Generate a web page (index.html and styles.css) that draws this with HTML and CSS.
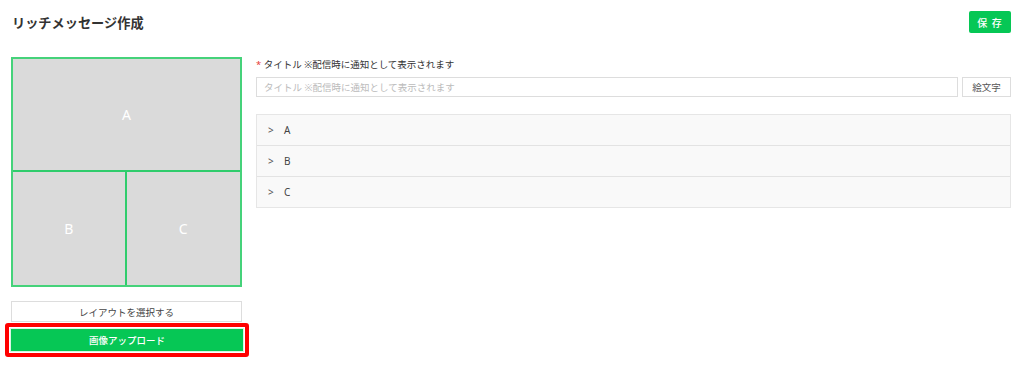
FILE: index.html
```html
<!DOCTYPE html>
<html lang="ja">
<head>
  <meta charset="UTF-8" />
  <meta name="viewport" content="width=device-width, initial-scale=1.0"/>
  <title>リッチメッセージ作成</title>
  <link rel="stylesheet" href="styles.css">
</head>
<body>

  <div class="page">
    <div class="header">
      <h1>リッチメッセージ作成</h1>
      <button class="btn-save">保 存</button>
    </div>

    <div class="main">
      <!-- left: layout preview -->
      <div class="preview">
        <div class="layout">
          <div class="cell cell-a">A</div>
          <div class="cell cell-b">B</div>
          <div class="cell cell-c">C</div>
        </div>

        <button class="btn-layout">レイアウトを選択する</button>
        <div class="highlight">
          <button class="btn-upload">画像アップロード</button>
        </div>
      </div>

      <!-- right: form -->
      <div class="form">
        <label class="field-label"><span class="req">*</span> タイトル ※配信時に通知として表示されます</label>
        <div class="input-row">
          <input type="text" placeholder="タイトル ※配信時に通知として表示されます">
          <button class="btn-emoji">絵文字</button>
        </div>

        <div class="accordion">
          <div class="acc-row"><span class="chev">&gt;</span>A</div>
          <div class="acc-row"><span class="chev">&gt;</span>B</div>
          <div class="acc-row"><span class="chev">&gt;</span>C</div>
        </div>
      </div>
    </div>
  </div>

</body>
</html>
```

FILE: styles.css
```css
body {
  margin: 0;
  font-family: 'Noto Sans', 'Noto Sans CJK JP', sans-serif;
  background: #fff;
  color: #333;
}

.page {
  padding: 11px 13px 0 11px;
}

.header {
  display: flex;
  justify-content: space-between;
  align-items: center;
  height: 22px;
}

h1 {
  margin: 0 0 0 1px;
  font-size: 13.2px;
  font-weight: bold;
  color: #333;
}

.btn-save {
  width: 42px;
  height: 22px;
  padding: 0;
  border: none;
  border-radius: 2px;
  background: #06c755;
  color: #fff;
  font-family: inherit;
  font-size: 10px;
  font-weight: 500;
  letter-spacing: 1px;
  cursor: pointer;
}

.main {
  display: flex;
  gap: 14px;
  margin-top: 24px;
}

.preview {
  width: 231px;
  flex-shrink: 0;
}

.layout {
  height: 230px;
  box-sizing: border-box;
  border: 2px solid #45d27a;
  display: grid;
  grid-template-columns: 1fr 1fr;
  grid-template-rows: 1fr 1fr;
  background: #dadada;
}

.cell {
  display: flex;
  justify-content: center;
  align-items: center;
  color: #fff;
  font-size: 14px;
}

.cell-a {
  grid-column: span 2;
  border-bottom: 2px solid #2fcc6c;
}

.cell-b {
  border-right: 2px solid #2fcc6c;
}

.btn-layout {
  display: block;
  width: 100%;
  height: 21px;
  margin-top: 14px;
  padding: 0;
  border: 1px solid #ddd;
  background: #fff;
  color: #444;
  font-family: inherit;
  font-size: 9.5px;
  cursor: pointer;
}

.highlight {
  margin: 1px -7px 0 -6px;
  border: 4px solid #f00;
  border-radius: 3px;
  padding: 1px;
}

.btn-upload {
  display: block;
  width: 100%;
  height: 24px;
  padding: 0;
  border: 1px solid #d8f5e3;
  background: #06c755;
  color: #fff;
  font-family: inherit;
  font-size: 9.5px;
  font-weight: 500;
  cursor: pointer;
}

.form {
  flex: 1;
}

.field-label {
  display: block;
  font-size: 9.5px;
  line-height: 13px;
  margin-top: 1px;
  color: #333;
}

.req {
  color: #e53935;
}

.input-row {
  display: flex;
  gap: 4px;
  margin-top: 6px;
}

.input-row input {
  flex: 1;
  height: 20px;
  box-sizing: border-box;
  border: 1px solid #ddd;
  padding: 0 7px;
  font-family: inherit;
  font-size: 9.5px;
  color: #333;
}

.input-row input::placeholder {
  color: #bbb;
}

.btn-emoji {
  width: 49px;
  height: 20px;
  padding: 0;
  border: 1px solid #ddd;
  background: #fff;
  color: #555;
  font-family: inherit;
  font-size: 9.5px;
  cursor: pointer;
}

.accordion {
  margin-top: 17px;
  border: 1px solid #e6e6e6;
}

.acc-row {
  height: 30px;
  display: flex;
  align-items: center;
  padding-left: 11px;
  background: #f9f9f9;
  font-size: 10px;
  color: #444;
  border-top: 1px solid #e3e3e3;
}

.acc-row:first-child {
  border-top: none;
}

.chev {
  width: 16px;
  color: #555;
}
```
